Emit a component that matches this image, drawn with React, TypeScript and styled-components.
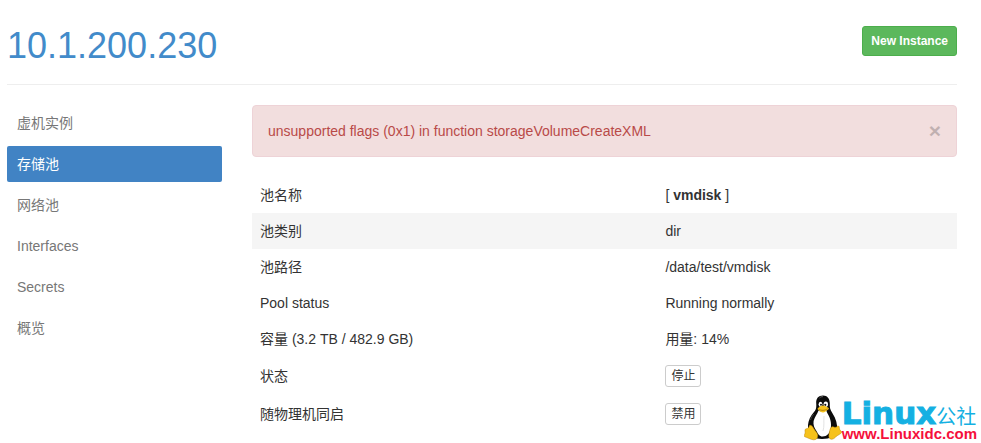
import React from "react";
import styled, { createGlobalStyle, css } from "styled-components";

const GlobalStyle = createGlobalStyle`
  *, *::before, *::after { box-sizing: border-box; }
  body {
    margin: 0;
    background: #fff;
    color: #333;
    font-family: "Liberation Sans", Arial, "Noto Sans CJK SC", sans-serif;
    font-size: 14px;
    line-height: 20px;
  }
  button { font-family: inherit; cursor: pointer; }
`;

const Page = styled.div`
  position: relative;
  min-height: 100vh;
  padding: 25px 24px 10px 7px;
`;

const Header = styled.header`
  display: flex;
  justify-content: space-between;
  align-items: flex-start;
  padding-bottom: 17px;
  margin-bottom: 20px;
  border-bottom: 1px solid #eee;
`;

const Title = styled.h1`
  margin: 0;
  font-size: 36px;
  font-weight: 400;
  line-height: 42px;
`;

const TitleLink = styled.a`
  color: #428bca;
  text-decoration: none;
`;

const PrimaryButton = styled.button`
  margin-top: 1px;
  padding: 5px 8px;
  border: 1px solid #4cae4c;
  border-radius: 3px;
  background: #5cb85c;
  color: #fff;
  font-size: 12px;
  font-weight: 700;
  line-height: 18px;
`;

const Columns = styled.div`
  display: grid;
  grid-template-columns: 215px minmax(0, 1fr);
  column-gap: 30px;
`;

const NavList = styled.ul`
  display: flex;
  flex-direction: column;
  gap: 5px;
  margin: 0;
  padding: 0;
  list-style: none;
`;

const NavLink = styled.a<{ $active?: boolean }>`
  display: block;
  padding: 8px 10px;
  border-radius: 2px;
  color: #777;
  text-decoration: none;
  ${(p) =>
    p.$active &&
    css`
      background: #4183c4;
      color: #fff;
    `}
`;

const Alert = styled.div`
  display: flex;
  justify-content: space-between;
  align-items: center;
  margin-bottom: 20px;
  padding: 15px;
  border: 1px solid #eed3d7;
  border-radius: 4px;
  background: #f2dede;
  color: #b94a48;
`;

const CloseButton = styled.button`
  padding: 0;
  border: 0;
  background: transparent;
  color: #000;
  font-size: 21px;
  font-weight: 700;
  line-height: 20px;
  opacity: 0.2;
`;

const PoolTable = styled.table`
  width: 100%;
  border-collapse: collapse;
  table-layout: fixed;
`;

const Row = styled.tr<{ $shaded?: boolean }>`
  background: ${(p) => (p.$shaded ? "#f5f5f5" : "transparent")};
`;

const Label = styled.th`
  width: 57.5%;
  padding: 8px;
  font-weight: 400;
  text-align: left;
`;

const Value = styled.td`
  padding: 8px;
`;

const SmallButton = styled.button`
  display: block;
  padding: 1px 5px;
  border: 1px solid #ccc;
  border-radius: 3px;
  background: #fff;
  color: #333;
  font-size: 12px;
  line-height: 18px;
`;

const Watermark = styled.a`
  position: absolute;
  right: 4px;
  bottom: 2px;
  display: flex;
  align-items: flex-end;
  text-decoration: none;
`;

const BrandText = styled.span`
  display: flex;
  flex-direction: column;
`;

const BrandName = styled.span`
  display: flex;
  align-items: baseline;
  color: #14b0e2;
  font-family: "DejaVu Sans", "Noto Sans CJK SC", sans-serif;
  font-size: 31px;
  font-weight: 700;
  line-height: 25px;
  -webkit-text-stroke: 1px #14b0e2;
`;

const BrandSuffix = styled.span`
  font-family: "Noto Sans CJK SC", sans-serif;
  font-size: 20px;
  font-weight: 400;
  line-height: 20px;
  -webkit-text-stroke: 0;
`;

const BrandUrl = styled.span`
  color: #f5103c;
  font-family: "Liberation Sans", Arial, sans-serif;
  font-size: 15px;
  font-weight: 700;
  line-height: 15px;
`;

function Penguin() {
  return (
    <svg width="38" height="46" viewBox="0 0 38 46" aria-hidden="true">
      <path
        d="M19 .5c-4.700 0-7 3-6.800 7.500.2 4 .3 6-2.200 9-3.500 4-5.700 8.500-6 13L4 36c2 5 7 8 14 8 8.500 0 13.500-3 15-8 .8-6.500-1-12.500-4.700-18-2.300-3.500-2.600-5.500-2.500-9.500C25.800 3.500 23.400.5 19 .5z"
        fill="#0b0b0b"
      />
      <path
        d="M14.500 15.500c-1 3.500-4 6.500-4.900 10.500-.7 4 .9 7 2.900 10 1.500 3 3 5.500 6 5.500 4.500 0 7.300-3.500 8.200-7.500 1-6-.4-10.500-2.600-14.500-1-2-1.600-3-2.100-5-2.500 2-5.300 2.500-7.500 1z"
        fill="#fff"
      />
      <path d="M20 21c-.5 6 .5 10-1 15" stroke="#e3e3e3" strokeWidth="1" fill="none" />
      <ellipse cx="16.500" cy="9.300" rx="1.900" ry="2.600" fill="#fff" />
      <ellipse cx="21.800" cy="9.300" rx="2.200" ry="2.700" fill="#fff" />
      <circle cx="17" cy="9.800" r="1" fill="#111" />
      <circle cx="21.300" cy="9.800" r="1.100" fill="#111" />
      <path
        d="M13.800 13.300c1.500-1.500 3.500-2.800 5.200-2.800s3.500 1.200 5.400 2.300c.8.600.5 1.500-.4 2-1.700 1-3.200 2.700-5 2.700s-3-1.300-4.600-2.500c-.7-.5-1-1.100-.6-1.700z"
        fill="#f6c21c"
      />
      <path d="M14.500 14c3 2 6 1.700 9.300-.3" stroke="#9a6b08" strokeWidth=".7" fill="none" />
      <path
        d="M5.500 30.500c1.800-.7 3 .8 4.200 3 1.400 2.300 3.500 4 4 6.500.4 3-1.400 5-4.200 4.800C6.500 44.500 3.500 42.500.8 41.800c-1.200-.5-.3-2 .2-3.500.4-1.500-.4-3 .3-4 1-1 3 .2 4.200-3.800z"
        fill="#f6c21c"
        stroke="#b98209"
        strokeWidth=".5"
      />
      <path
        d="M27.500 32c1.300-1 2.500.6 4.200.3 1.500-.3 1.600-1.700 2.800-1.300 1 .5.700 2.500 1.300 3.800.5 1 2.300 1.700 1.800 2.700-.6 1.500-4 2.500-6 4.500-1.500 1.700-3.400 2.800-5.300 2-2-1-1.500-4-1-6.500.4-2 .9-4.300 2.200-5.500z"
        fill="#f6c21c"
        stroke="#b98209"
        strokeWidth=".5"
      />
      <path d="M15.500 3c.8-1 2-1.500 3.500-1.300" stroke="#777" strokeWidth=".8" fill="none" />
      <path d="M6.500 25c.8-2.500 1.800-4.500 3.300-6" stroke="#555" strokeWidth=".7" fill="none" />
    </svg>
  );
}

const navItems = ["虚机实例", "存储池", "网络池", "Interfaces", "Secrets", "概览"];

const rows: { label: string; value: React.ReactNode; shaded?: boolean }[] = [
  { label: "池名称", value: <>[ <strong>vmdisk</strong> ]</> },
  { label: "池类别", value: "dir", shaded: true },
  { label: "池路径", value: "/data/test/vmdisk" },
  { label: "Pool status", value: "Running normally" },
  { label: "容量 (3.2 TB / 482.9 GB)", value: "用量: 14%" },
  { label: "状态", value: <SmallButton type="button">停止</SmallButton> },
  { label: "随物理机同启", value: <SmallButton type="button">禁用</SmallButton> },
];

export default function App() {
  return (
    <>
      <GlobalStyle />
      <Page>
        <Header>
          <Title>
            <TitleLink href="#host">10.1.200.230</TitleLink>
          </Title>
          <PrimaryButton type="button">New Instance</PrimaryButton>
        </Header>
        <Columns>
          <nav>
            <NavList>
              {navItems.map((item) => {
                const active = item === "存储池";
                return (
                  <li key={item}>
                    <NavLink href="#" $active={active} aria-current={active ? "page" : undefined}>
                      {item}
                    </NavLink>
                  </li>
                );
              })}
            </NavList>
          </nav>
          <main>
            <Alert role="alert">
              <span>unsupported flags (0x1) in function storageVolumeCreateXML</span>
              <CloseButton type="button" aria-label="Close">×</CloseButton>
            </Alert>
            <PoolTable>
              <tbody>
                {rows.map((row) => (
                  <Row key={row.label} $shaded={row.shaded}>
                    <Label scope="row">{row.label}</Label>
                    <Value>{row.value}</Value>
                  </Row>
                ))}
              </tbody>
            </PoolTable>
          </main>
        </Columns>
        <Watermark href="#linuxidc">
          <Penguin />
          <BrandText>
            <BrandName>
              Linux<BrandSuffix>公社</BrandSuffix>
            </BrandName>
            <BrandUrl>www.Linuxidc.com</BrandUrl>
          </BrandText>
        </Watermark>
      </Page>
    </>
  );
}
